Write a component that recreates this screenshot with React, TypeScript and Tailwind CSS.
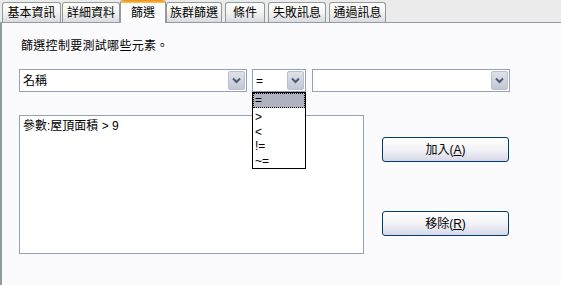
import React from "react";

const font = { fontFamily: '"Liberation Sans", "Noto Sans CJK TC", sans-serif' };

function Chevron() {
  return (
    <svg width="9" height="7" viewBox="0 0 9 7">
      <path d="M1 1.5 L4.5 5 L8 1.5" fill="none" stroke="#4d5b75" strokeWidth="2" />
    </svg>
  );
}

function Combo({ w, text }: { w: string; text: string }) {
  return (
    <div className={`${w} h-[23px] border border-[#8fa3bd] bg-white flex items-stretch`}>
      <div className="flex-1 flex items-center pl-[3px] text-[12px] text-black">{text}</div>
      <div className="w-[17px] m-[1px] rounded-[2px] bg-gradient-to-b from-[#dfe2ea] to-[#c2c7d3] border border-[#b9bfcc] flex items-center justify-center">
        <Chevron />
      </div>
    </div>
  );
}

function Tab({ label, w, selected }: { label: string; w: string; selected?: boolean }) {
  if (selected) {
    return (
      <div
        className={`${w} h-[23px] -mx-[1px] relative z-10 bg-[#fcfcfe] border-x border-[#919b9c] rounded-t-[3px] flex items-center justify-center text-[12px] text-black self-start`}
      >
        <div className="absolute left-0 right-0 top-0 h-[3px] rounded-t-[3px] bg-gradient-to-b from-[#e68b2c] to-[#ffc73c]" />
        <span className="mt-[2px]">{label}</span>
      </div>
    );
  }
  return (
    <div
      className={`${w} h-[20px] mt-[2px] bg-gradient-to-b from-[#ffffff] via-[#f3f3ef] to-[#d9dae3] border border-b-0 border-[#919b9c] rounded-t-[3px] flex items-center justify-center text-[12px] text-black`}
    >
      {label}
    </div>
  );
}

function XPButton({ label, hot }: { label: string; hot: string }) {
  return (
    <div className="w-[127px] h-[25px] rounded-[3px] border border-[#003c74] bg-gradient-to-b from-[#ffffff] via-[#f3f3f7] to-[#d6d8e6] flex items-center justify-center text-[12px] text-black">
      <span>
        {label}(<span className="underline">{hot}</span>)
      </span>
    </div>
  );
}

export default function App() {
  return (
    <div className="w-[561px] h-[285px] bg-[#fbfbfd] relative overflow-hidden flex flex-col" style={font}>
      <div className="flex items-start pl-[2px] h-[23px] gap-[1px] bg-[#ebebeb] shrink-0">
        <Tab label="基本資訊" w="w-[59px]" />
        <Tab label="詳細資料" w="w-[58px]" />
        <Tab label="篩選" w="w-[46px]" selected />
        <Tab label="族群篩選" w="w-[56px]" />
        <div className="w-[1px]" />
        <Tab label="條件" w="w-[40px]" />
        <div className="w-[1px]" />
        <Tab label="失敗訊息" w="w-[58px]" />
        <div className="w-[1px]" />
        <Tab label="通過訊息" w="w-[57px]" />
      </div>
      <div className="-mt-[1px] flex-1 bg-[#fbfbfd] border-t border-l-2 border-[#919b9c] pl-[17px]">
        <div className="mt-[15px] h-[16px] leading-[16px] text-[12px] tracking-[0.3px] text-black pl-[2px]">篩選控制要測試哪些元素。</div>
        <div className="mt-[15px] flex">
          <Combo w="w-[228px]" text="名稱" />
          <div className="w-[5px]" />
          <Combo w="w-[54px]" text="=" />
          <div className="w-[6px]" />
          <Combo w="w-[198px]" text="" />
        </div>
        <div className="mt-[23px] flex items-start">
          <div className="w-[345px] h-[139px] border border-[#8fa3bd] bg-white pl-[3px] pt-[3px] text-[12px] leading-[14px] text-black">
            參數:屋頂面積 &gt; 9
          </div>
          <div className="ml-[18px] mt-[22px] flex flex-col gap-[49px]">
            <XPButton label="加入" hot="A" />
            <XPButton label="移除" hot="R" />
          </div>
        </div>
      </div>
      <div className="absolute left-[252px] top-[92px] w-[54px] h-[77px] bg-white border border-black text-[12px] text-black z-20">
        <div className="h-[15px] bg-[#b0b3bf] border border-dotted border-black leading-[13px] pl-[1px]">=</div>
        <div className="pt-[2px]">
          <div className="h-[14.5px] leading-[15px] pl-[2px]">&gt;</div>
          <div className="h-[14.5px] leading-[15px] pl-[2px]">&lt;</div>
          <div className="h-[14.5px] leading-[15px] pl-[2px]">!=</div>
          <div className="h-[14.5px] leading-[15px] pl-[2px]">~=</div>
        </div>
      </div>
    </div>
  );
}
